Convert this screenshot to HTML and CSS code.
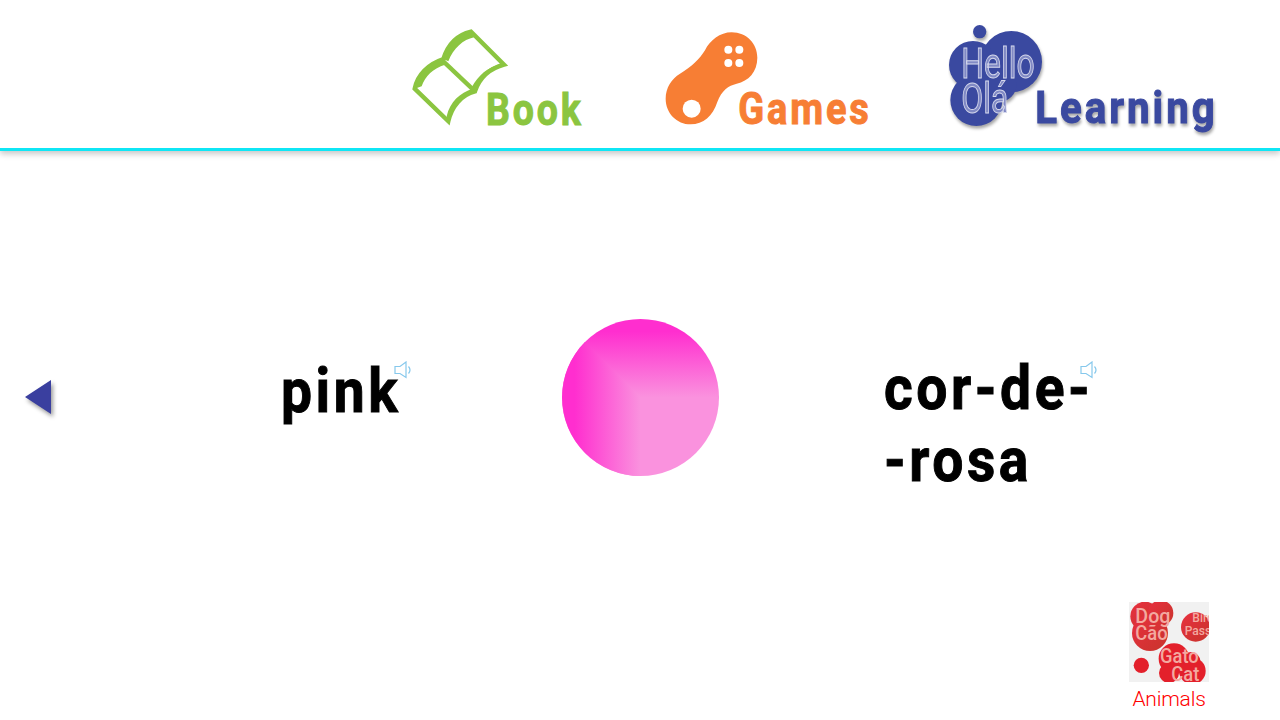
FILE: index.html
```html
<!DOCTYPE html>
<html lang="en">
<head>
  <meta charset="UTF-8" />
  <meta name="viewport" content="width=device-width, initial-scale=1.0"/>
  <title>Hello Olá - pink</title>
  <link rel="stylesheet" href="styles.css">
</head>
<body>

<header class="topbar">
  <a class="logo logo-book" href="#book">
    <svg width="196" height="99" viewBox="36 50 588 297">
      <path class="book-line" d="M44 232 C52 190 85 158 130 143 C145 95 175 70 213 61 L312 160 C275 170 240 195 225 240 C185 250 155 285 145 330 Z"/>
      <path class="book-line" d="M130 150 L225 240"/>
      <path class="book-fill" d="M44 232 C52 190 85 158 130 143 L135 160 C100 170 75 195 65 225 Z"/>
      <path class="book-fill" d="M130 143 C145 95 175 70 213 61 L222 78 C190 85 160 110 145 150 Z"/>
      <path class="book-fill" d="M225 240 C240 195 275 170 312 160 L296 160 C265 168 235 190 215 228 Z"/>
      <path class="book-fill" d="M145 330 C155 285 185 250 225 240 L218 232 C180 245 150 270 140 315 Z"/>
      <text class="logo-text book-text" transform="translate(258 340) scale(.84 1)">Book</text>
    </svg>
  </a>
  <a class="logo logo-games" href="#games">
    <svg width="235" height="94" viewBox="795 62 705 282">
      <path class="games-pad" d="M995 66 C1040 66 1072 100 1072 142 C1072 185 1045 212 1010 220 C985 226 965 240 952 275 C938 318 910 342 872 342 C830 342 797 308 797 265 C797 232 815 205 840 190 C875 170 900 145 915 120 C930 90 960 66 995 66 Z"/>
      <circle class="hole" cx="875" cy="295" r="27"/>
      <circle class="hole" cx="985" cy="118" r="12"/>
      <circle class="hole" cx="1018" cy="118" r="12"/>
      <circle class="hole" cx="985" cy="158" r="12"/>
      <circle class="hole" cx="1018" cy="158" r="12"/>
      <text class="logo-text games-text" transform="translate(1015 340) scale(.85 1)">Games</text>
    </svg>
  </a>
  <a class="logo logo-learning" href="#learning">
    <svg width="310" height="118" viewBox="50 42 930 354">
      <g class="learning-mark">
        <circle cx="145" cy="65" r="20"/>
        <circle cx="240" cy="155" r="92"/>
        <circle cx="125" cy="165" r="72"/>
        <circle cx="135" cy="270" r="78"/>
        <circle cx="205" cy="225" r="50"/>
        <text class="logo-text learning-text" transform="translate(312 340) scale(.9 1)">Learning</text>
      </g>
      <text class="hello-text" transform="translate(90 205) scale(.76 1)">Hello</text>
      <text class="hello-text" transform="translate(90 308) scale(.76 1)">Olá</text>
    </svg>
  </a>
</header>

<main class="content">
  <section class="card-row">
    <a class="back" href="#back">
      <svg width="28" height="36" viewBox="0 0 28 36"><path d="M0 17 L26 0 L26 34 Z"/></svg>
    </a>
    <div class="word word-en">
      <span class="word-text">pink</span>
      <svg class="speaker speaker-en" width="18" height="18" viewBox="0 0 18 18">
        <path d="M1 5.5 H6 L12 1 V16.5 L6 12.5 H1 Z"/>
        <path d="M14.5 5.5 Q17.5 9 14.5 12.5"/>
      </svg>
    </div>
    <div class="swatch"></div>
    <div class="word word-pt">
      <span class="word-text">cor-de-<br>-rosa</span>
      <svg class="speaker speaker-pt" width="18" height="18" viewBox="0 0 18 18">
        <path d="M1 5.5 H6 L12 1 V16.5 L6 12.5 H1 Z"/>
        <path d="M14.5 5.5 Q17.5 9 14.5 12.5"/>
      </svg>
    </div>
  </section>

  <nav class="next-topic">
    <a class="topic" href="#animals">
      <svg class="topic-thumb" width="80" height="80" viewBox="55 45 240 240">
        <defs>
          <linearGradient id="blobShade" x1="0" y1="0" x2="1" y2="1">
            <stop offset="0" stop-color="#e8303f"/>
            <stop offset="1" stop-color="#c8342c"/>
          </linearGradient>
        </defs>
        <rect x="55" y="45" width="240" height="240" fill="#f1f1f1"/>
        <g fill="url(#blobShade)">
          <circle cx="103" cy="88" r="44"/>
          <circle cx="150" cy="78" r="38"/>
          <circle cx="118" cy="138" r="54"/>
          <circle cx="255" cy="120" r="44"/>
        </g>
        <g class="blob-red">
          <circle cx="190" cy="215" r="46"/>
          <circle cx="240" cy="225" r="30"/>
          <circle cx="245" cy="252" r="40"/>
          <circle cx="175" cy="258" r="30"/>
          <circle cx="92" cy="235" r="23"/>
        </g>
        <text class="thumb-text" transform="translate(74 108) scale(.95 1)" font-size="62">Dog</text>
        <text class="thumb-text" transform="translate(74 160) scale(.95 1)" font-size="58">Cão</text>
        <text class="thumb-text" x="245" y="105" font-size="36">Bird</text>
        <text class="thumb-text" transform="translate(222 143) scale(.95 1)" font-size="38">Pass</text>
        <text class="thumb-text" transform="translate(148 228) scale(.95 1)" font-size="58">Gato</text>
        <text class="thumb-text" transform="translate(182 282) scale(.95 1)" font-size="58">Cat</text>
      </svg>
      <span class="topic-name">Animals</span>
    </a>
  </nav>
</main>

</body>
</html>
```

FILE: styles.css
```css
* {
  box-sizing: border-box;
}

html, body {
  height: 100%;
  margin: 0;
  padding: 0;
  font-family: Roboto, 'Liberation Sans', sans-serif;
  background: #ffffff;
  overflow: hidden;
}

body {
  display: flex;
  flex-direction: column;
}

a {
  text-decoration: none;
}

/* top bar */
.topbar {
  flex: none;
  height: 151px;
  display: flex;
  align-items: flex-start;
  border-bottom: 3px solid #0fe6f5;
  box-shadow: 0 3px 6px rgba(0,0,0,0.22);
}

.logo {
  display: block;
}

.logo svg {
  display: block;
}

.logo-book {
  margin: 28px 0 0 412px;
}

.logo-games {
  margin: 31px 0 0 57px;
}

.logo-learning {
  margin: 24px 0 0 48px;
}

.logo-text {
  font-family: Roboto, sans-serif;
  font-weight: 700;
  font-size: 134px;
  letter-spacing: 10px;
  stroke-width: 3;
}

.book-line {
  fill: none;
  stroke: #8bc540;
  stroke-width: 13;
  stroke-linejoin: miter;
}

.book-fill {
  fill: #8bc540;
}

.book-text {
  fill: #8bc540;
  stroke: #8bc540;
}

.games-pad {
  fill: #f77e34;
}

.hole {
  fill: #ffffff;
}

.games-text {
  fill: #f77e34;
  stroke: #f77e34;
}

.learning-mark {
  fill: #3a49a0;
  filter: drop-shadow(3px 8px 5px rgba(0,0,0,0.35));
}

.learning-text {
  fill: #3a49a0;
  stroke: #3a49a0;
}

.hello-text {
  font-family: Roboto, sans-serif;
  font-size: 126px;
  font-weight: 400;
  fill: #8089c4;
  stroke: #d5d8ec;
  stroke-width: 3;
}

/* flash card */
.content {
  flex: 1;
  display: flex;
  flex-direction: column;
  justify-content: space-between;
  padding: 168px 71px 8px 0;
}

.card-row {
  display: grid;
  grid-template-columns: 281px 281px 322px 1fr;
  align-items: start;
}

.back {
  margin: 61px 0 0 25px;
  display: block;
}

.back svg {
  display: block;
  fill: #3a3f9f;
  filter: drop-shadow(2px 3px 2px rgba(0,0,0,0.4));
  overflow: visible;
}

.word {
  position: relative;
  margin-top: 33px;
  font-size: 62px;
  font-weight: 700;
  line-height: 72px;
  letter-spacing: 4px;
  color: #000000;
  white-space: nowrap;
}

.word-en {
  margin-top: 36px;
}

.word-text {
  display: inline-block;
  transform: scaleX(.89);
  transform-origin: left center;
  -webkit-text-stroke: 1px #000000;
}

.speaker {
  position: absolute;
  fill: none;
  stroke: #86c8ec;
  stroke-width: 1.2;
}

.speaker-en {
  left: 113px;
  top: 6px;
}

.speaker-pt {
  left: 196px;
  top: 9px;
}

.swatch {
  position: relative;
  width: 157px;
  height: 157px;
  border-radius: 50%;
  overflow: hidden;
  background: linear-gradient(to bottom, #ff2ecf 8%, #fa92de 50%);
}

.swatch::before {
  content: "";
  position: absolute;
  inset: 0;
  background: linear-gradient(to right, #ff2ecf 8%, #fa92de 50%);
  clip-path: polygon(0 0, 50% 50%, 50% 100%, 0 100%);
}

/* next topic link */
.next-topic {
  display: flex;
  justify-content: flex-end;
}

.topic {
  display: flex;
  flex-direction: column;
  align-items: center;
  width: 80px;
}

.topic-thumb {
  display: block;
}

.blob-red {
  fill: #e3202b;
}

.thumb-text {
  font-family: Roboto, sans-serif;
  font-weight: 500;
  fill: #f3a9a0;
}

.topic-name {
  margin-top: 4px;
  font-size: 21px;
  font-weight: 300;
  line-height: 26px;
  letter-spacing: -0.2px;
  color: #ff0000;
  white-space: nowrap;
}
```
